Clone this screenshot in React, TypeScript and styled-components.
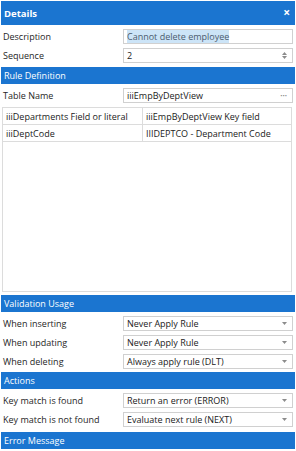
import React from 'react';
import styled, { createGlobalStyle } from 'styled-components';

const GlobalStyle = createGlobalStyle`
  html, body {
    margin: 0;
    padding: 0;
    background: #ffffff;
  }
  body {
    font-family: 'Segoe UI', 'Open Sans', 'Liberation Sans', sans-serif;
    font-size: 9px;
    color: #222222;
  }
`;

const palette = {
  accent: '#1b75d0',
  border: '#d0d0d0',
  gridLine: '#dcdcdc',
  label: '#262626',
  selection: '#cce4f7',
};

const Panel = styled.div`
  width: 296px;
  height: 451px;
  box-sizing: border-box;
  padding: 1px 1px 0;
  display: flex;
  flex-direction: column;
  overflow: hidden;
`;

const TitleBar = styled.div`
  height: 24px;
  background: ${palette.accent};
  color: white;
  display: flex;
  align-items: center;
  justify-content: space-between;
  padding: 0 5px 0 3px;
  font-weight: 700;
  font-size: 9.5px;
`;

const Close = styled.span`
  font-size: 12px;
  font-weight: 700;
  line-height: 1;
`;

const SectionHeader = styled.div<{ $gap?: number }>`
  height: 17px;
  margin-top: ${({ $gap }) => $gap ?? 2}px;
  background: ${palette.accent};
  color: white;
  display: flex;
  align-items: center;
  padding: 0 3px;
  flex-shrink: 0;
`;

const Rows = styled.div`
  margin-top: 2px;
  display: flex;
  flex-direction: column;
`;

const Row = styled.div`
  height: 19px;
  display: grid;
  grid-template-columns: 120px 1fr;
  align-items: center;
  padding: 0 2px;
  flex-shrink: 0;
`;

const Label = styled.span`
  color: ${palette.label};
`;

const Field = styled.div`
  height: 15px;
  box-sizing: border-box;
  border: 1px solid ${palette.border};
  display: flex;
  align-items: center;
  justify-content: space-between;
  padding: 0 5px 0 3px;
  background: white;
`;

const Selected = styled.span`
  background: ${palette.selection};
  color: #4b5b6e;
`;

const Adornment = styled.span`
  color: #8a8a8a;
  font-size: 6px;
  line-height: 1;
  display: flex;
  align-items: center;
`;

const Spinner = styled.span`
  display: flex;
  flex-direction: column;
  gap: 1px;
`;

const Grid = styled.div`
  margin: 2px 3px 0 1px;
  height: 183px;
  border: 1px solid ${palette.gridLine};
  flex-shrink: 0;
`;

const GridRow = styled.div`
  display: grid;
  grid-template-columns: 139px 1fr;
  height: 16px;
  border-bottom: 1px solid ${palette.gridLine};
`;

const GridCell = styled.div`
  display: flex;
  align-items: center;
  padding: 0 3px;
  & + & {
    border-left: 1px solid ${palette.gridLine};
  }
`;

const Caret = () => (
  <Adornment>
    <svg width="5" height="3" viewBox="0 0 5 3">
      <path d="M0 0 L5 0 L2.5 3 Z" fill="#8c8c8c" />
    </svg>
  </Adornment>
);

type Option = { label: string; value: string };

const usage: Option[] = [
  { label: 'When inserting', value: 'Never Apply Rule' },
  { label: 'When updating', value: 'Never Apply Rule' },
  { label: 'When deleting', value: 'Always apply rule (DLT)' },
];

const actions: Option[] = [
  { label: 'Key match is found', value: 'Return an error (ERROR)' },
  { label: 'Key match is not found', value: 'Evaluate next rule (NEXT)' },
];

const mapping = [
  ['iiiDepartments Field or literal', 'iiiEmpByDeptView Key field'],
  ['iiiDeptCode', 'IIIDEPTCO - Department Code'],
];

const SelectRows = ({ options }: { options: Option[] }) => (
  <Rows>
    {options.map((o) => (
      <Row key={o.label}>
        <Label>{o.label}</Label>
        <Field>
          <span>{o.value}</span>
          <Caret />
        </Field>
      </Row>
    ))}
  </Rows>
);

export default function App() {
  return (
    <>
      <GlobalStyle />
      <Panel>
        <TitleBar>
          <span>Details</span>
          <Close>×</Close>
        </TitleBar>
        <Rows>
          <Row>
            <Label>Description</Label>
            <Field>
              <Selected>Cannot delete employee</Selected>
            </Field>
          </Row>
          <Row>
            <Label>Sequence</Label>
            <Field>
              <span>2</span>
              <Spinner>
                <svg width="5" height="3" viewBox="0 0 5 3">
                  <path d="M0 3 L5 3 L2.5 0 Z" fill="#8c8c8c" />
                </svg>
                <svg width="5" height="3" viewBox="0 0 5 3">
                  <path d="M0 0 L5 0 L2.5 3 Z" fill="#8c8c8c" />
                </svg>
              </Spinner>
            </Field>
          </Row>
        </Rows>
        <SectionHeader>Rule Definition</SectionHeader>
        <Rows>
          <Row>
            <Label>Table Name</Label>
            <Field>
              <span>iiiEmpByDeptView</span>
              <Adornment>•••</Adornment>
            </Field>
          </Row>
        </Rows>
        <Grid>
          {mapping.map(([left, right]) => (
            <GridRow key={left}>
              <GridCell>{left}</GridCell>
              <GridCell>{right}</GridCell>
            </GridRow>
          ))}
        </Grid>
        <SectionHeader $gap={3}>Validation Usage</SectionHeader>
        <SelectRows options={usage} />
        <SectionHeader $gap={1}>Actions</SectionHeader>
        <SelectRows options={actions} />
        <SectionHeader $gap={3}>Error Message</SectionHeader>
      </Panel>
    </>
  );
}
